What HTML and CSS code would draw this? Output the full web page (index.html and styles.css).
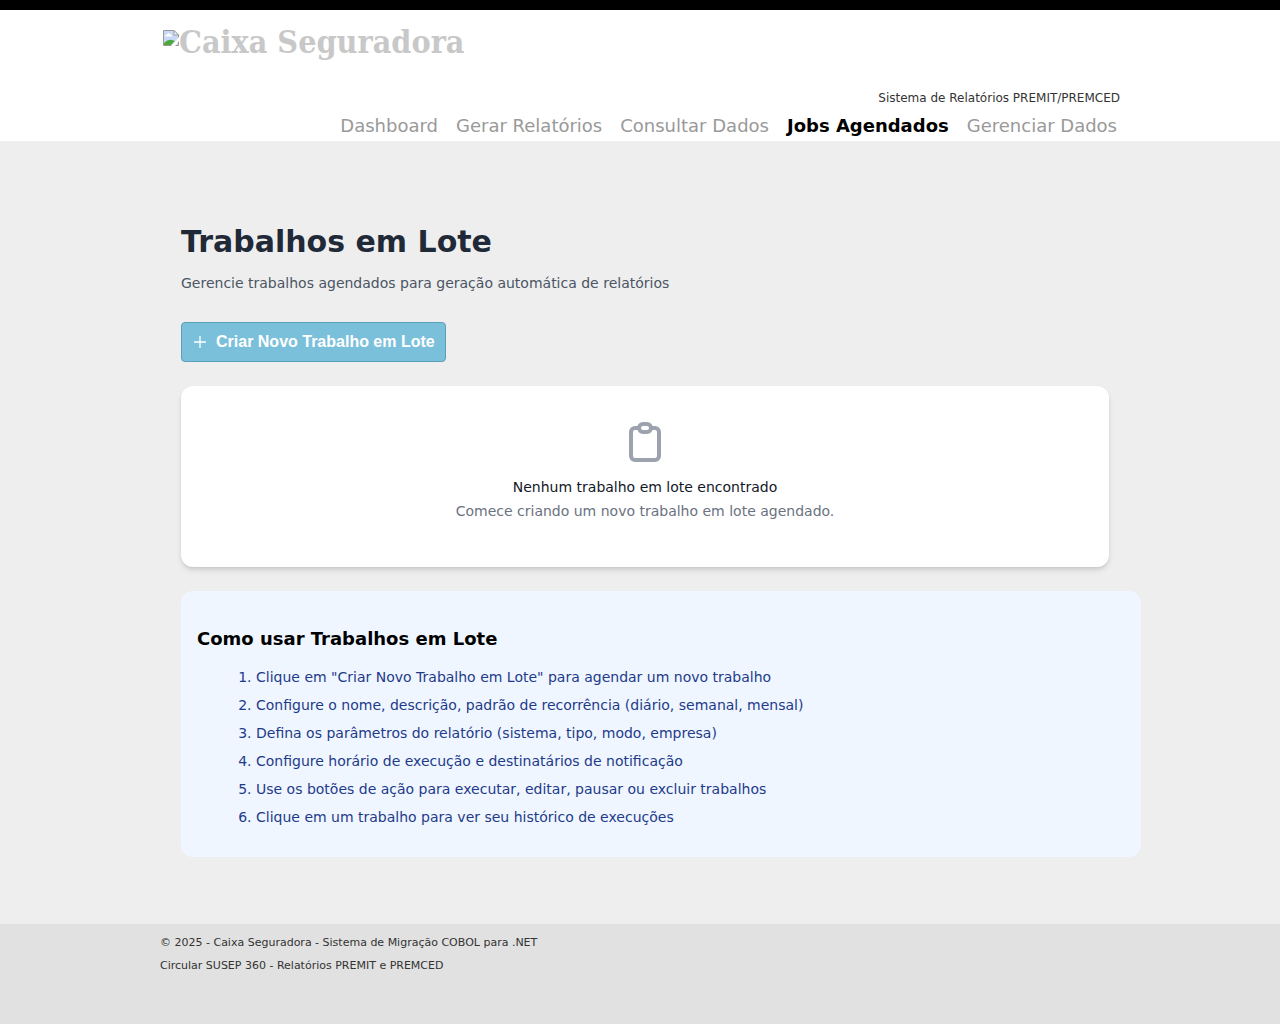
FILE: index.html
```html
<!DOCTYPE html>
<html lang="pt-BR">
<head>
<meta charset="utf-8">
<meta name="viewport" content="width=device-width, initial-scale=1">
<title>Trabalhos em Lote - Caixa Seguradora</title>
<link rel="stylesheet" href="styles.css">
</head>
<body>
<header class="site-header">
  <div class="container header-inner">
    <a class="logo" href="#">
      <svg class="logo-icon" width="16" height="16" viewBox="0 0 16 16" aria-hidden="true">
        <path d="M0.500 0.500H11L15.500 5V15.500H0.500Z" fill="#c8d9f8" stroke="#9a9a9a"/>
        <path d="M2 6.500Q2 4.500 4 4.500Q5 2.500 7 4Q9 4 9 6.500Z" fill="#fff"/>
        <path d="M1 15V13Q5 9 9 10L12 11L8 15Z" fill="#4ba83a"/>
        <path d="M11 0.500V5H15.500Z" fill="#fff" stroke="#9a9a9a"/>
        <path d="M16 7V11L12 16H8Z" fill="#fff"/>
      </svg>
      <span>Caixa Seguradora</span>
    </a>
    <p class="tagline">Sistema de Relatórios PREMIT/PREMCED</p>
    <nav class="menu" aria-label="Principal">
      <a href="#">Dashboard</a>
      <a href="#">Gerar Relatórios</a>
      <a href="#">Consultar Dados</a>
      <a class="active" href="#" aria-current="page">Jobs Agendados</a>
      <a href="#">Gerenciar Dados</a>
    </nav>
  </div>
</header>

<main class="page">
  <h1>Trabalhos em Lote</h1>
  <p class="lead">Gerencie trabalhos agendados para geração automática de relatórios</p>
  <button class="create" type="button">
    <svg width="16" height="16" viewBox="0 0 16 16" aria-hidden="true"><path d="M8 2V14M2 8H14" stroke="currentColor" stroke-width="1.300" fill="none"/></svg>
    Criar Novo Trabalho em Lote
  </button>
  <section class="card">
    <svg width="48" height="48" viewBox="0 0 24 24" fill="none" stroke="currentColor" stroke-width="2" stroke-linecap="round" stroke-linejoin="round" aria-hidden="true"><path d="M9 5H7a2 2 0 00-2 2v12a2 2 0 002 2h10a2 2 0 002-2V7a2 2 0 00-2-2h-2M9 5a2 2 0 002 2h2a2 2 0 002-2M9 5a2 2 0 012-2h2a2 2 0 012 2"/></svg>
    <h2>Nenhum trabalho em lote encontrado</h2>
    <p>Comece criando um novo trabalho em lote agendado.</p>
  </section>
  <section class="help">
    <h2>Como usar Trabalhos em Lote</h2>
    <ol>
      <li>Clique em "Criar Novo Trabalho em Lote" para agendar um novo trabalho</li>
      <li>Configure o nome, descrição, padrão de recorrência (diário, semanal, mensal)</li>
      <li>Defina os parâmetros do relatório (sistema, tipo, modo, empresa)</li>
      <li>Configure horário de execução e destinatários de notificação</li>
      <li>Use os botões de ação para executar, editar, pausar ou excluir trabalhos</li>
      <li>Clique em um trabalho para ver seu histórico de execuções</li>
    </ol>
  </section>
</main>

<footer class="site-footer">
  <div class="container">
    <p>© 2025 - Caixa Seguradora - Sistema de Migração COBOL para .NET</p>
    <p>Circular SUSEP 360 - Relatórios PREMIT e PREMCED</p>
  </div>
</footer>
</body>
</html>
```
FILE: styles.css
```css
* { box-sizing: border-box; }

body {
  display: flex;
  flex-direction: column;
  min-height: 100vh;
  margin: 0;
  background: #eee;
  color: #333;
  font-family: Verdana, "DejaVu Sans", sans-serif;
  font-size: 14px;
  line-height: 24px;
}

h1, h2, p, ol { margin: 0; }

.container {
  width: 100%;
  max-width: 960px;
  margin: 0 auto;
}

.site-header {
  border-top: 10px solid #000;
  background: #fff;
}

.header-inner {
  display: flex;
  flex-direction: column;
  align-items: flex-end;
  padding-top: 12px;
}

.logo {
  display: flex;
  align-self: flex-start;
  margin-left: 3px;
  color: #c8c8c8;
  font-family: Rockwell, "DejaVu Serif Condensed", "DejaVu Serif", serif;
  font-size: 32px;
  font-weight: bold;
  line-height: 40px;
  text-decoration: none;
}

.logo-icon { margin-top: 8px; }

.tagline {
  margin-top: 24px;
  font-size: 12px;
}

.menu {
  display: flex;
  flex-wrap: wrap;
  gap: 18px;
  padding: 4px 3px 3px 0;
  font-size: 18px;
}

.menu a {
  color: #999;
  text-decoration: none;
}

.menu .active {
  color: #000;
  font-weight: bold;
}

.page {
  flex: 1;
  width: 100%;
  max-width: 1002px;
  margin: 0 auto;
  padding: 80px 0 64px 42px;
}

h1 {
  color: #1f2937;
  font-size: 30px;
  line-height: 42px;
}

.lead {
  margin-top: 8px;
  color: #4b5563;
}

.create {
  display: flex;
  align-items: center;
  gap: 8px;
  height: 40px;
  margin: 27px 0 24px;
  padding: 0 10px;
  border: 1px solid #5a9fb8;
  border-radius: 4px;
  background: #7bc0db;
  color: #fff;
  font: bold 16px "Liberation Sans", Arial, sans-serif;
}

.card {
  display: flex;
  flex-direction: column;
  align-items: center;
  margin-right: 32px;
  padding: 32px 32px 44px;
  border-radius: 12px;
  background: #fff;
  box-shadow: 0 4px 6px -1px rgba(0, 0, 0, 0.1), 0 2px 4px -1px rgba(0, 0, 0, 0.1);
  color: #6b7280;
  text-align: center;
}

.card svg {
  margin-bottom: 9px;
  color: #9ca3af;
}

.card h2 {
  color: #111827;
  font-size: 14px;
  font-weight: normal;
}

.help {
  margin-top: 24px;
  padding: 36px 16px 26px;
  border-radius: 12px;
  background: #eff6ff;
}

.help h2 {
  color: #000;
  font-size: 18px;
}

.help ol {
  margin-top: 12px;
  padding-left: 59px;
  color: #1e3a8a;
  line-height: 28px;
}

.site-footer {
  min-height: 100px;
  padding: 7px 0 12px;
  background: #e1e1e1;
  font-size: 11px;
  line-height: 23px;
}
```
